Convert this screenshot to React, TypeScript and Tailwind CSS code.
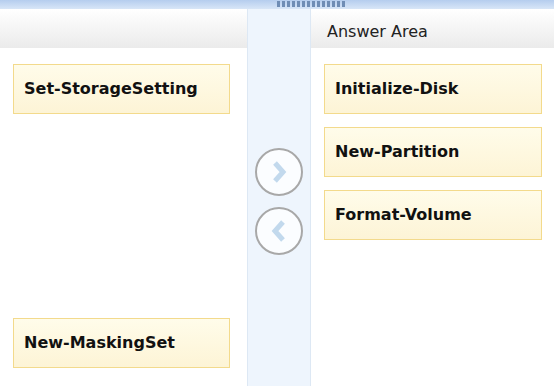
import { ReactNode } from "react";

const font = { fontFamily: '"DejaVu Sans", Verdana, sans-serif' };

function Item({ children }: { children: ReactNode }) {
	return (
		<div className="flex h-[50px] items-center border border-[#f3da8c] bg-gradient-to-b from-[#fffcea] to-[#fdf4d6] pl-[10px] text-[16px] font-bold text-[#111]">
			{children}
		</div>
	);
}

function MoveButton({ dir }: { dir: "right" | "left" }) {
	return (
		<button className="flex h-[48px] w-[48px] items-center justify-center rounded-full border-2 border-[#a8a8a8] bg-[#fbfdff]">
			<svg width="22" height="24" viewBox="0 0 22 24">
				<path
					d={dir === "right" ? "M7 3 L15 12 L7 21" : "M15 3 L7 12 L15 21"}
					fill="none"
					stroke="#c2d9ed"
					strokeWidth="5"
					strokeLinejoin="miter"
				/>
			</svg>
		</button>
	);
}

export default function App() {
	return (
		<div className="flex h-[386px] w-[554px] flex-col overflow-hidden bg-white" style={font}>
			{/* splitter grip */}
			<div className="flex h-[9px] shrink-0 bg-gradient-to-b from-[#b5cdee] to-[#d8e6f7] pl-[277px]">
				<div className="mt-[1px] flex h-[6px] gap-[2px]">
					{Array.from({ length: 14 }).map((_, i) => (
						<div key={i} className="h-[6px] w-[3px] bg-[#6f8db5]" />
					))}
				</div>
			</div>

			<div className="flex min-h-0 flex-1">
				{/* source list */}
				<div className="flex w-[247px] flex-col">
					<div className="h-[39px] bg-gradient-to-b from-white to-[#ebebeb]" />
					<div className="flex flex-1 flex-col justify-between pb-[18px] pl-[13px] pr-[17px] pt-[16px]">
						<Item>Set-StorageSetting</Item>
						<Item>New-MaskingSet</Item>
					</div>
				</div>

				{/* buttons */}
				<div className="flex w-[64px] flex-col items-center gap-[11px] border-x border-[#dde8f4] bg-[#eef5fd] pt-[139px]">
					<MoveButton dir="right" />
					<MoveButton dir="left" />
				</div>

				{/* answer area */}
				<div className="flex flex-1 flex-col">
					<div className="flex h-[39px] items-center bg-gradient-to-b from-white to-[#ebebeb] pl-[16px] pt-[6px] text-[16px] text-[#222]">
						Answer Area
					</div>
					<div className="flex flex-col gap-[13px] pl-[13px] pr-[12px] pt-[16px]">
						<Item>Initialize-Disk</Item>
						<Item>New-Partition</Item>
						<Item>Format-Volume</Item>
					</div>
				</div>
			</div>
		</div>
	);
}
